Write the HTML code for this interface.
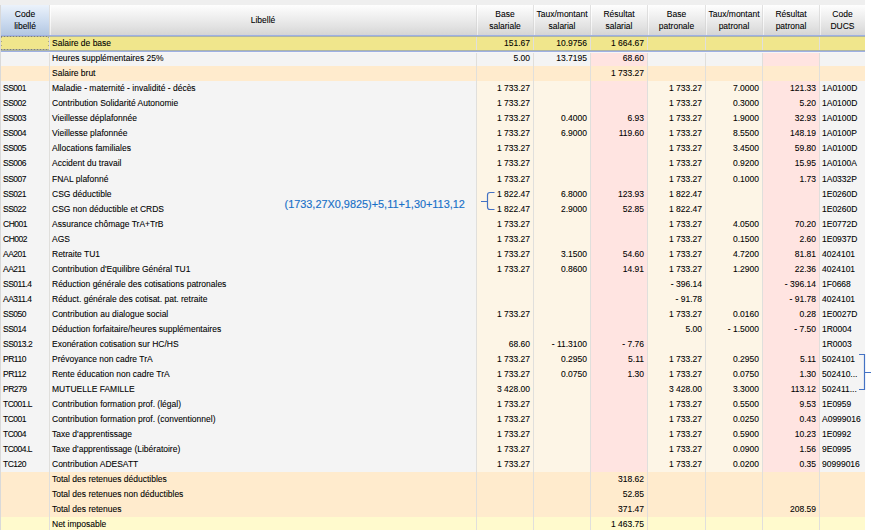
<!DOCTYPE html>
<html><head><meta charset="utf-8"><style>
*{margin:0;padding:0;box-sizing:border-box}
html,body{width:871px;height:530px;overflow:hidden;background:#ffffff}
body{position:relative;font-family:"Liberation Sans",sans-serif;font-size:8.5px;color:#000}
.a{position:absolute}
.t{position:absolute;white-space:nowrap;line-height:15px;height:15px;-webkit-text-stroke:0.08px #000}
.r{text-align:right}
.h{position:absolute;top:5px;height:30px;background:linear-gradient(#fefefe,#f1f1f1 35%,#e3e3e3 70%,#d5d5d5);text-align:center;line-height:12px;color:#000;-webkit-text-stroke:0.08px #000}
</style></head><body>

<div class="a" style="left:0;top:0;width:865px;height:5px;background:#efefef"></div>
<div class="a" style="left:0;top:5px;width:1px;height:525px;background:#d9d9d9"></div>
<div class="h" style="left:1px;width:48px;background:linear-gradient(#ebf2fb,#c9d9ee 60%,#b3c7e1);padding-top:3px;">Code<br>libellé</div>
<div class="h" style="left:50px;width:426px;padding-top:9px;">Libellé</div>
<div class="h" style="left:477px;width:56px;padding-top:3px;">Base<br>salariale</div>
<div class="h" style="left:534px;width:56px;padding-top:3px;">Taux/montant<br>salarial</div>
<div class="h" style="left:591px;width:56px;padding-top:3px;">Résultat<br>salarial</div>
<div class="h" style="left:648px;width:57px;padding-top:3px;">Base<br>patronale</div>
<div class="h" style="left:706px;width:56px;padding-top:3px;">Taux/montant<br>patronal</div>
<div class="h" style="left:763px;width:56px;padding-top:3px;">Résultat<br>patronal</div>
<div class="h" style="left:820px;width:45px;padding-top:3px;">Code<br>DUCS</div>
<div class="a" style="left:49px;top:5px;width:1px;height:30px;background:linear-gradient(#e2e2e2,#d4d4d4)"></div>
<div class="a" style="left:50px;top:5px;width:1px;height:30px;background:linear-gradient(rgba(255,255,255,.9),rgba(255,255,255,.5))"></div>
<div class="a" style="left:476px;top:5px;width:1px;height:30px;background:linear-gradient(#e2e2e2,#d4d4d4)"></div>
<div class="a" style="left:477px;top:5px;width:1px;height:30px;background:linear-gradient(rgba(255,255,255,.9),rgba(255,255,255,.5))"></div>
<div class="a" style="left:533px;top:5px;width:1px;height:30px;background:linear-gradient(#e2e2e2,#d4d4d4)"></div>
<div class="a" style="left:534px;top:5px;width:1px;height:30px;background:linear-gradient(rgba(255,255,255,.9),rgba(255,255,255,.5))"></div>
<div class="a" style="left:590px;top:5px;width:1px;height:30px;background:linear-gradient(#e2e2e2,#d4d4d4)"></div>
<div class="a" style="left:591px;top:5px;width:1px;height:30px;background:linear-gradient(rgba(255,255,255,.9),rgba(255,255,255,.5))"></div>
<div class="a" style="left:647px;top:5px;width:1px;height:30px;background:linear-gradient(#e2e2e2,#d4d4d4)"></div>
<div class="a" style="left:648px;top:5px;width:1px;height:30px;background:linear-gradient(rgba(255,255,255,.9),rgba(255,255,255,.5))"></div>
<div class="a" style="left:705px;top:5px;width:1px;height:30px;background:linear-gradient(#e2e2e2,#d4d4d4)"></div>
<div class="a" style="left:706px;top:5px;width:1px;height:30px;background:linear-gradient(rgba(255,255,255,.9),rgba(255,255,255,.5))"></div>
<div class="a" style="left:762px;top:5px;width:1px;height:30px;background:linear-gradient(#e2e2e2,#d4d4d4)"></div>
<div class="a" style="left:763px;top:5px;width:1px;height:30px;background:linear-gradient(rgba(255,255,255,.9),rgba(255,255,255,.5))"></div>
<div class="a" style="left:819px;top:5px;width:1px;height:30px;background:linear-gradient(#e2e2e2,#d4d4d4)"></div>
<div class="a" style="left:820px;top:5px;width:1px;height:30px;background:linear-gradient(rgba(255,255,255,.9),rgba(255,255,255,.5))"></div>
<div class="a" style="left:1px;top:35px;width:864px;height:1px;background:#9eb0e4"></div>
<div class="a" style="left:1px;top:36px;width:48px;height:15px;background:#f0e68c"></div>
<div class="a" style="left:50px;top:36px;width:426px;height:15px;background:#f0e68c"></div>
<div class="a" style="left:477px;top:36px;width:56px;height:15px;background:#f0e68c"></div>
<div class="a" style="left:534px;top:36px;width:56px;height:15px;background:#f0e68c"></div>
<div class="a" style="left:591px;top:36px;width:56px;height:15px;background:#f0e68c"></div>
<div class="a" style="left:648px;top:36px;width:57px;height:15px;background:#f0e68c"></div>
<div class="a" style="left:706px;top:36px;width:56px;height:15px;background:#f0e68c"></div>
<div class="a" style="left:763px;top:36px;width:56px;height:15px;background:#f0e68c"></div>
<div class="a" style="left:820px;top:36px;width:45px;height:15px;background:#f0e68c"></div>
<div class="a" style="left:49px;top:36px;width:1px;height:15px;background:#e0dfdc"></div>
<div class="a" style="left:476px;top:36px;width:1px;height:15px;background:#e0dfdc"></div>
<div class="a" style="left:533px;top:36px;width:1px;height:15px;background:#e0dfdc"></div>
<div class="a" style="left:590px;top:36px;width:1px;height:15px;background:#e0dfdc"></div>
<div class="a" style="left:647px;top:36px;width:1px;height:15px;background:#e0dfdc"></div>
<div class="a" style="left:705px;top:36px;width:1px;height:15px;background:#e0dfdc"></div>
<div class="a" style="left:762px;top:36px;width:1px;height:15px;background:#e0dfdc"></div>
<div class="a" style="left:819px;top:36px;width:1px;height:15px;background:#e0dfdc"></div>
<div class="t" style="left:52px;top:36px">Salaire de base</div>
<div class="t r" style="right:341px;top:36px">151.67</div>
<div class="t r" style="right:284px;top:36px">10.9756</div>
<div class="t r" style="right:227px;top:36px">1 664.67</div>
<div class="a" style="left:1px;top:51px;width:48px;height:15px;background:#f4f4f4"></div>
<div class="a" style="left:50px;top:51px;width:426px;height:15px;background:#f4f4f4"></div>
<div class="a" style="left:477px;top:51px;width:56px;height:15px;background:#f4f4f4"></div>
<div class="a" style="left:534px;top:51px;width:56px;height:15px;background:#f4f4f4"></div>
<div class="a" style="left:591px;top:51px;width:56px;height:15px;background:#ffe4e1"></div>
<div class="a" style="left:648px;top:51px;width:57px;height:15px;background:#f4f4f4"></div>
<div class="a" style="left:706px;top:51px;width:56px;height:15px;background:#f4f4f4"></div>
<div class="a" style="left:763px;top:51px;width:56px;height:15px;background:#ffe4e1"></div>
<div class="a" style="left:820px;top:51px;width:45px;height:15px;background:#f4f4f4"></div>
<div class="a" style="left:49px;top:51px;width:1px;height:15px;background:#e0dfdc"></div>
<div class="a" style="left:476px;top:51px;width:1px;height:15px;background:#e0dfdc"></div>
<div class="a" style="left:533px;top:51px;width:1px;height:15px;background:#e0dfdc"></div>
<div class="a" style="left:590px;top:51px;width:1px;height:15px;background:#e0dfdc"></div>
<div class="a" style="left:647px;top:51px;width:1px;height:15px;background:#e0dfdc"></div>
<div class="a" style="left:705px;top:51px;width:1px;height:15px;background:#e0dfdc"></div>
<div class="a" style="left:762px;top:51px;width:1px;height:15px;background:#e0dfdc"></div>
<div class="a" style="left:819px;top:51px;width:1px;height:15px;background:#e0dfdc"></div>
<div class="t" style="left:52px;top:51px">Heures supplémentaires 25%</div>
<div class="t r" style="right:341px;top:51px">5.00</div>
<div class="t r" style="right:284px;top:51px">13.7195</div>
<div class="t r" style="right:227px;top:51px">68.60</div>
<div class="a" style="left:1px;top:66px;width:48px;height:15px;background:#ffebcd"></div>
<div class="a" style="left:50px;top:66px;width:426px;height:15px;background:#ffebcd"></div>
<div class="a" style="left:477px;top:66px;width:56px;height:15px;background:#ffebcd"></div>
<div class="a" style="left:534px;top:66px;width:56px;height:15px;background:#ffebcd"></div>
<div class="a" style="left:591px;top:66px;width:56px;height:15px;background:#ffebcd"></div>
<div class="a" style="left:648px;top:66px;width:57px;height:15px;background:#ffebcd"></div>
<div class="a" style="left:706px;top:66px;width:56px;height:15px;background:#ffebcd"></div>
<div class="a" style="left:763px;top:66px;width:56px;height:15px;background:#ffebcd"></div>
<div class="a" style="left:820px;top:66px;width:45px;height:15px;background:#ffebcd"></div>
<div class="a" style="left:49px;top:66px;width:1px;height:15px;background:#e0dfdc"></div>
<div class="a" style="left:476px;top:66px;width:1px;height:15px;background:#e0dfdc"></div>
<div class="a" style="left:533px;top:66px;width:1px;height:15px;background:#e0dfdc"></div>
<div class="a" style="left:590px;top:66px;width:1px;height:15px;background:#e0dfdc"></div>
<div class="a" style="left:647px;top:66px;width:1px;height:15px;background:#e0dfdc"></div>
<div class="a" style="left:705px;top:66px;width:1px;height:15px;background:#e0dfdc"></div>
<div class="a" style="left:762px;top:66px;width:1px;height:15px;background:#e0dfdc"></div>
<div class="a" style="left:819px;top:66px;width:1px;height:15px;background:#e0dfdc"></div>
<div class="t" style="left:52px;top:66px">Salaire brut</div>
<div class="t r" style="right:227px;top:66px">1 733.27</div>
<div class="a" style="left:1px;top:81px;width:48px;height:15px;background:#f4f4f4"></div>
<div class="a" style="left:50px;top:81px;width:426px;height:15px;background:#f4f4f4"></div>
<div class="a" style="left:477px;top:81px;width:56px;height:15px;background:#fdf5e6"></div>
<div class="a" style="left:534px;top:81px;width:56px;height:15px;background:#fdf5e6"></div>
<div class="a" style="left:591px;top:81px;width:56px;height:15px;background:#ffe4e1"></div>
<div class="a" style="left:648px;top:81px;width:57px;height:15px;background:#fdf5e6"></div>
<div class="a" style="left:706px;top:81px;width:56px;height:15px;background:#fdf5e6"></div>
<div class="a" style="left:763px;top:81px;width:56px;height:15px;background:#ffe4e1"></div>
<div class="a" style="left:820px;top:81px;width:45px;height:15px;background:#f4f4f4"></div>
<div class="a" style="left:49px;top:81px;width:1px;height:15px;background:#e0dfdc"></div>
<div class="a" style="left:476px;top:81px;width:1px;height:15px;background:#e0dfdc"></div>
<div class="a" style="left:533px;top:81px;width:1px;height:15px;background:#e0dfdc"></div>
<div class="a" style="left:590px;top:81px;width:1px;height:15px;background:#e0dfdc"></div>
<div class="a" style="left:647px;top:81px;width:1px;height:15px;background:#e0dfdc"></div>
<div class="a" style="left:705px;top:81px;width:1px;height:15px;background:#e0dfdc"></div>
<div class="a" style="left:762px;top:81px;width:1px;height:15px;background:#e0dfdc"></div>
<div class="a" style="left:819px;top:81px;width:1px;height:15px;background:#e0dfdc"></div>
<div class="t" style="left:3px;top:81px;letter-spacing:-0.5px">SS001</div>
<div class="t" style="left:52px;top:81px">Maladie - maternité - invalidité - décès</div>
<div class="t r" style="right:341px;top:81px">1 733.27</div>
<div class="t r" style="right:169px;top:81px">1 733.27</div>
<div class="t r" style="right:112px;top:81px">7.0000</div>
<div class="t r" style="right:55px;top:81px">121.33</div>
<div class="t" style="left:822px;top:81px">1A0100D</div>
<div class="a" style="left:1px;top:96px;width:48px;height:15px;background:#f4f4f4"></div>
<div class="a" style="left:50px;top:96px;width:426px;height:15px;background:#f4f4f4"></div>
<div class="a" style="left:477px;top:96px;width:56px;height:15px;background:#fdf5e6"></div>
<div class="a" style="left:534px;top:96px;width:56px;height:15px;background:#fdf5e6"></div>
<div class="a" style="left:591px;top:96px;width:56px;height:15px;background:#ffe4e1"></div>
<div class="a" style="left:648px;top:96px;width:57px;height:15px;background:#fdf5e6"></div>
<div class="a" style="left:706px;top:96px;width:56px;height:15px;background:#fdf5e6"></div>
<div class="a" style="left:763px;top:96px;width:56px;height:15px;background:#ffe4e1"></div>
<div class="a" style="left:820px;top:96px;width:45px;height:15px;background:#f4f4f4"></div>
<div class="a" style="left:49px;top:96px;width:1px;height:15px;background:#e0dfdc"></div>
<div class="a" style="left:476px;top:96px;width:1px;height:15px;background:#e0dfdc"></div>
<div class="a" style="left:533px;top:96px;width:1px;height:15px;background:#e0dfdc"></div>
<div class="a" style="left:590px;top:96px;width:1px;height:15px;background:#e0dfdc"></div>
<div class="a" style="left:647px;top:96px;width:1px;height:15px;background:#e0dfdc"></div>
<div class="a" style="left:705px;top:96px;width:1px;height:15px;background:#e0dfdc"></div>
<div class="a" style="left:762px;top:96px;width:1px;height:15px;background:#e0dfdc"></div>
<div class="a" style="left:819px;top:96px;width:1px;height:15px;background:#e0dfdc"></div>
<div class="t" style="left:3px;top:96px;letter-spacing:-0.5px">SS002</div>
<div class="t" style="left:52px;top:96px">Contribution Solidarité Autonomie</div>
<div class="t r" style="right:341px;top:96px">1 733.27</div>
<div class="t r" style="right:169px;top:96px">1 733.27</div>
<div class="t r" style="right:112px;top:96px">0.3000</div>
<div class="t r" style="right:55px;top:96px">5.20</div>
<div class="t" style="left:822px;top:96px">1A0100D</div>
<div class="a" style="left:1px;top:111px;width:48px;height:15px;background:#f4f4f4"></div>
<div class="a" style="left:50px;top:111px;width:426px;height:15px;background:#f4f4f4"></div>
<div class="a" style="left:477px;top:111px;width:56px;height:15px;background:#fdf5e6"></div>
<div class="a" style="left:534px;top:111px;width:56px;height:15px;background:#fdf5e6"></div>
<div class="a" style="left:591px;top:111px;width:56px;height:15px;background:#ffe4e1"></div>
<div class="a" style="left:648px;top:111px;width:57px;height:15px;background:#fdf5e6"></div>
<div class="a" style="left:706px;top:111px;width:56px;height:15px;background:#fdf5e6"></div>
<div class="a" style="left:763px;top:111px;width:56px;height:15px;background:#ffe4e1"></div>
<div class="a" style="left:820px;top:111px;width:45px;height:15px;background:#f4f4f4"></div>
<div class="a" style="left:49px;top:111px;width:1px;height:15px;background:#e0dfdc"></div>
<div class="a" style="left:476px;top:111px;width:1px;height:15px;background:#e0dfdc"></div>
<div class="a" style="left:533px;top:111px;width:1px;height:15px;background:#e0dfdc"></div>
<div class="a" style="left:590px;top:111px;width:1px;height:15px;background:#e0dfdc"></div>
<div class="a" style="left:647px;top:111px;width:1px;height:15px;background:#e0dfdc"></div>
<div class="a" style="left:705px;top:111px;width:1px;height:15px;background:#e0dfdc"></div>
<div class="a" style="left:762px;top:111px;width:1px;height:15px;background:#e0dfdc"></div>
<div class="a" style="left:819px;top:111px;width:1px;height:15px;background:#e0dfdc"></div>
<div class="t" style="left:3px;top:111px;letter-spacing:-0.5px">SS003</div>
<div class="t" style="left:52px;top:111px">Vieillesse déplafonnée</div>
<div class="t r" style="right:341px;top:111px">1 733.27</div>
<div class="t r" style="right:284px;top:111px">0.4000</div>
<div class="t r" style="right:227px;top:111px">6.93</div>
<div class="t r" style="right:169px;top:111px">1 733.27</div>
<div class="t r" style="right:112px;top:111px">1.9000</div>
<div class="t r" style="right:55px;top:111px">32.93</div>
<div class="t" style="left:822px;top:111px">1A0100D</div>
<div class="a" style="left:1px;top:126px;width:48px;height:15px;background:#f4f4f4"></div>
<div class="a" style="left:50px;top:126px;width:426px;height:15px;background:#f4f4f4"></div>
<div class="a" style="left:477px;top:126px;width:56px;height:15px;background:#fdf5e6"></div>
<div class="a" style="left:534px;top:126px;width:56px;height:15px;background:#fdf5e6"></div>
<div class="a" style="left:591px;top:126px;width:56px;height:15px;background:#ffe4e1"></div>
<div class="a" style="left:648px;top:126px;width:57px;height:15px;background:#fdf5e6"></div>
<div class="a" style="left:706px;top:126px;width:56px;height:15px;background:#fdf5e6"></div>
<div class="a" style="left:763px;top:126px;width:56px;height:15px;background:#ffe4e1"></div>
<div class="a" style="left:820px;top:126px;width:45px;height:15px;background:#f4f4f4"></div>
<div class="a" style="left:49px;top:126px;width:1px;height:15px;background:#e0dfdc"></div>
<div class="a" style="left:476px;top:126px;width:1px;height:15px;background:#e0dfdc"></div>
<div class="a" style="left:533px;top:126px;width:1px;height:15px;background:#e0dfdc"></div>
<div class="a" style="left:590px;top:126px;width:1px;height:15px;background:#e0dfdc"></div>
<div class="a" style="left:647px;top:126px;width:1px;height:15px;background:#e0dfdc"></div>
<div class="a" style="left:705px;top:126px;width:1px;height:15px;background:#e0dfdc"></div>
<div class="a" style="left:762px;top:126px;width:1px;height:15px;background:#e0dfdc"></div>
<div class="a" style="left:819px;top:126px;width:1px;height:15px;background:#e0dfdc"></div>
<div class="t" style="left:3px;top:126px;letter-spacing:-0.5px">SS004</div>
<div class="t" style="left:52px;top:126px">Vieillesse plafonnée</div>
<div class="t r" style="right:341px;top:126px">1 733.27</div>
<div class="t r" style="right:284px;top:126px">6.9000</div>
<div class="t r" style="right:227px;top:126px">119.60</div>
<div class="t r" style="right:169px;top:126px">1 733.27</div>
<div class="t r" style="right:112px;top:126px">8.5500</div>
<div class="t r" style="right:55px;top:126px">148.19</div>
<div class="t" style="left:822px;top:126px">1A0100P</div>
<div class="a" style="left:1px;top:141px;width:48px;height:15px;background:#f4f4f4"></div>
<div class="a" style="left:50px;top:141px;width:426px;height:15px;background:#f4f4f4"></div>
<div class="a" style="left:477px;top:141px;width:56px;height:15px;background:#fdf5e6"></div>
<div class="a" style="left:534px;top:141px;width:56px;height:15px;background:#fdf5e6"></div>
<div class="a" style="left:591px;top:141px;width:56px;height:15px;background:#ffe4e1"></div>
<div class="a" style="left:648px;top:141px;width:57px;height:15px;background:#fdf5e6"></div>
<div class="a" style="left:706px;top:141px;width:56px;height:15px;background:#fdf5e6"></div>
<div class="a" style="left:763px;top:141px;width:56px;height:15px;background:#ffe4e1"></div>
<div class="a" style="left:820px;top:141px;width:45px;height:15px;background:#f4f4f4"></div>
<div class="a" style="left:49px;top:141px;width:1px;height:15px;background:#e0dfdc"></div>
<div class="a" style="left:476px;top:141px;width:1px;height:15px;background:#e0dfdc"></div>
<div class="a" style="left:533px;top:141px;width:1px;height:15px;background:#e0dfdc"></div>
<div class="a" style="left:590px;top:141px;width:1px;height:15px;background:#e0dfdc"></div>
<div class="a" style="left:647px;top:141px;width:1px;height:15px;background:#e0dfdc"></div>
<div class="a" style="left:705px;top:141px;width:1px;height:15px;background:#e0dfdc"></div>
<div class="a" style="left:762px;top:141px;width:1px;height:15px;background:#e0dfdc"></div>
<div class="a" style="left:819px;top:141px;width:1px;height:15px;background:#e0dfdc"></div>
<div class="t" style="left:3px;top:141px;letter-spacing:-0.5px">SS005</div>
<div class="t" style="left:52px;top:141px">Allocations familiales</div>
<div class="t r" style="right:341px;top:141px">1 733.27</div>
<div class="t r" style="right:169px;top:141px">1 733.27</div>
<div class="t r" style="right:112px;top:141px">3.4500</div>
<div class="t r" style="right:55px;top:141px">59.80</div>
<div class="t" style="left:822px;top:141px">1A0100D</div>
<div class="a" style="left:1px;top:156px;width:48px;height:16px;background:#f4f4f4"></div>
<div class="a" style="left:50px;top:156px;width:426px;height:16px;background:#f4f4f4"></div>
<div class="a" style="left:477px;top:156px;width:56px;height:16px;background:#fdf5e6"></div>
<div class="a" style="left:534px;top:156px;width:56px;height:16px;background:#fdf5e6"></div>
<div class="a" style="left:591px;top:156px;width:56px;height:16px;background:#ffe4e1"></div>
<div class="a" style="left:648px;top:156px;width:57px;height:16px;background:#fdf5e6"></div>
<div class="a" style="left:706px;top:156px;width:56px;height:16px;background:#fdf5e6"></div>
<div class="a" style="left:763px;top:156px;width:56px;height:16px;background:#ffe4e1"></div>
<div class="a" style="left:820px;top:156px;width:45px;height:16px;background:#f4f4f4"></div>
<div class="a" style="left:49px;top:156px;width:1px;height:16px;background:#e0dfdc"></div>
<div class="a" style="left:476px;top:156px;width:1px;height:16px;background:#e0dfdc"></div>
<div class="a" style="left:533px;top:156px;width:1px;height:16px;background:#e0dfdc"></div>
<div class="a" style="left:590px;top:156px;width:1px;height:16px;background:#e0dfdc"></div>
<div class="a" style="left:647px;top:156px;width:1px;height:16px;background:#e0dfdc"></div>
<div class="a" style="left:705px;top:156px;width:1px;height:16px;background:#e0dfdc"></div>
<div class="a" style="left:762px;top:156px;width:1px;height:16px;background:#e0dfdc"></div>
<div class="a" style="left:819px;top:156px;width:1px;height:16px;background:#e0dfdc"></div>
<div class="t" style="left:3px;top:156px;letter-spacing:-0.5px">SS006</div>
<div class="t" style="left:52px;top:156px">Accident du travail</div>
<div class="t r" style="right:341px;top:156px">1 733.27</div>
<div class="t r" style="right:169px;top:156px">1 733.27</div>
<div class="t r" style="right:112px;top:156px">0.9200</div>
<div class="t r" style="right:55px;top:156px">15.95</div>
<div class="t" style="left:822px;top:156px">1A0100A</div>
<div class="a" style="left:1px;top:172px;width:48px;height:15px;background:#f4f4f4"></div>
<div class="a" style="left:50px;top:172px;width:426px;height:15px;background:#f4f4f4"></div>
<div class="a" style="left:477px;top:172px;width:56px;height:15px;background:#fdf5e6"></div>
<div class="a" style="left:534px;top:172px;width:56px;height:15px;background:#fdf5e6"></div>
<div class="a" style="left:591px;top:172px;width:56px;height:15px;background:#ffe4e1"></div>
<div class="a" style="left:648px;top:172px;width:57px;height:15px;background:#fdf5e6"></div>
<div class="a" style="left:706px;top:172px;width:56px;height:15px;background:#fdf5e6"></div>
<div class="a" style="left:763px;top:172px;width:56px;height:15px;background:#ffe4e1"></div>
<div class="a" style="left:820px;top:172px;width:45px;height:15px;background:#f4f4f4"></div>
<div class="a" style="left:49px;top:172px;width:1px;height:15px;background:#e0dfdc"></div>
<div class="a" style="left:476px;top:172px;width:1px;height:15px;background:#e0dfdc"></div>
<div class="a" style="left:533px;top:172px;width:1px;height:15px;background:#e0dfdc"></div>
<div class="a" style="left:590px;top:172px;width:1px;height:15px;background:#e0dfdc"></div>
<div class="a" style="left:647px;top:172px;width:1px;height:15px;background:#e0dfdc"></div>
<div class="a" style="left:705px;top:172px;width:1px;height:15px;background:#e0dfdc"></div>
<div class="a" style="left:762px;top:172px;width:1px;height:15px;background:#e0dfdc"></div>
<div class="a" style="left:819px;top:172px;width:1px;height:15px;background:#e0dfdc"></div>
<div class="t" style="left:3px;top:172px;letter-spacing:-0.5px">SS007</div>
<div class="t" style="left:52px;top:172px">FNAL plafonné</div>
<div class="t r" style="right:341px;top:172px">1 733.27</div>
<div class="t r" style="right:169px;top:172px">1 733.27</div>
<div class="t r" style="right:112px;top:172px">0.1000</div>
<div class="t r" style="right:55px;top:172px">1.73</div>
<div class="t" style="left:822px;top:172px">1A0332P</div>
<div class="a" style="left:1px;top:187px;width:48px;height:15px;background:#f4f4f4"></div>
<div class="a" style="left:50px;top:187px;width:426px;height:15px;background:#f4f4f4"></div>
<div class="a" style="left:477px;top:187px;width:56px;height:15px;background:#fdf5e6"></div>
<div class="a" style="left:534px;top:187px;width:56px;height:15px;background:#fdf5e6"></div>
<div class="a" style="left:591px;top:187px;width:56px;height:15px;background:#ffe4e1"></div>
<div class="a" style="left:648px;top:187px;width:57px;height:15px;background:#fdf5e6"></div>
<div class="a" style="left:706px;top:187px;width:56px;height:15px;background:#fdf5e6"></div>
<div class="a" style="left:763px;top:187px;width:56px;height:15px;background:#ffe4e1"></div>
<div class="a" style="left:820px;top:187px;width:45px;height:15px;background:#f4f4f4"></div>
<div class="a" style="left:49px;top:187px;width:1px;height:15px;background:#e0dfdc"></div>
<div class="a" style="left:476px;top:187px;width:1px;height:15px;background:#e0dfdc"></div>
<div class="a" style="left:533px;top:187px;width:1px;height:15px;background:#e0dfdc"></div>
<div class="a" style="left:590px;top:187px;width:1px;height:15px;background:#e0dfdc"></div>
<div class="a" style="left:647px;top:187px;width:1px;height:15px;background:#e0dfdc"></div>
<div class="a" style="left:705px;top:187px;width:1px;height:15px;background:#e0dfdc"></div>
<div class="a" style="left:762px;top:187px;width:1px;height:15px;background:#e0dfdc"></div>
<div class="a" style="left:819px;top:187px;width:1px;height:15px;background:#e0dfdc"></div>
<div class="t" style="left:3px;top:187px;letter-spacing:-0.5px">SS021</div>
<div class="t" style="left:52px;top:187px">CSG déductible</div>
<div class="t r" style="right:341px;top:187px">1 822.47</div>
<div class="t r" style="right:284px;top:187px">6.8000</div>
<div class="t r" style="right:227px;top:187px">123.93</div>
<div class="t r" style="right:169px;top:187px">1 822.47</div>
<div class="t" style="left:822px;top:187px">1E0260D</div>
<div class="a" style="left:1px;top:202px;width:48px;height:15px;background:#f4f4f4"></div>
<div class="a" style="left:50px;top:202px;width:426px;height:15px;background:#f4f4f4"></div>
<div class="a" style="left:477px;top:202px;width:56px;height:15px;background:#fdf5e6"></div>
<div class="a" style="left:534px;top:202px;width:56px;height:15px;background:#fdf5e6"></div>
<div class="a" style="left:591px;top:202px;width:56px;height:15px;background:#ffe4e1"></div>
<div class="a" style="left:648px;top:202px;width:57px;height:15px;background:#fdf5e6"></div>
<div class="a" style="left:706px;top:202px;width:56px;height:15px;background:#fdf5e6"></div>
<div class="a" style="left:763px;top:202px;width:56px;height:15px;background:#ffe4e1"></div>
<div class="a" style="left:820px;top:202px;width:45px;height:15px;background:#f4f4f4"></div>
<div class="a" style="left:49px;top:202px;width:1px;height:15px;background:#e0dfdc"></div>
<div class="a" style="left:476px;top:202px;width:1px;height:15px;background:#e0dfdc"></div>
<div class="a" style="left:533px;top:202px;width:1px;height:15px;background:#e0dfdc"></div>
<div class="a" style="left:590px;top:202px;width:1px;height:15px;background:#e0dfdc"></div>
<div class="a" style="left:647px;top:202px;width:1px;height:15px;background:#e0dfdc"></div>
<div class="a" style="left:705px;top:202px;width:1px;height:15px;background:#e0dfdc"></div>
<div class="a" style="left:762px;top:202px;width:1px;height:15px;background:#e0dfdc"></div>
<div class="a" style="left:819px;top:202px;width:1px;height:15px;background:#e0dfdc"></div>
<div class="t" style="left:3px;top:202px;letter-spacing:-0.5px">SS022</div>
<div class="t" style="left:52px;top:202px">CSG non déductible et CRDS</div>
<div class="t r" style="right:341px;top:202px">1 822.47</div>
<div class="t r" style="right:284px;top:202px">2.9000</div>
<div class="t r" style="right:227px;top:202px">52.85</div>
<div class="t r" style="right:169px;top:202px">1 822.47</div>
<div class="t" style="left:822px;top:202px">1E0260D</div>
<div class="a" style="left:1px;top:217px;width:48px;height:15px;background:#f4f4f4"></div>
<div class="a" style="left:50px;top:217px;width:426px;height:15px;background:#f4f4f4"></div>
<div class="a" style="left:477px;top:217px;width:56px;height:15px;background:#fdf5e6"></div>
<div class="a" style="left:534px;top:217px;width:56px;height:15px;background:#fdf5e6"></div>
<div class="a" style="left:591px;top:217px;width:56px;height:15px;background:#ffe4e1"></div>
<div class="a" style="left:648px;top:217px;width:57px;height:15px;background:#fdf5e6"></div>
<div class="a" style="left:706px;top:217px;width:56px;height:15px;background:#fdf5e6"></div>
<div class="a" style="left:763px;top:217px;width:56px;height:15px;background:#ffe4e1"></div>
<div class="a" style="left:820px;top:217px;width:45px;height:15px;background:#f4f4f4"></div>
<div class="a" style="left:49px;top:217px;width:1px;height:15px;background:#e0dfdc"></div>
<div class="a" style="left:476px;top:217px;width:1px;height:15px;background:#e0dfdc"></div>
<div class="a" style="left:533px;top:217px;width:1px;height:15px;background:#e0dfdc"></div>
<div class="a" style="left:590px;top:217px;width:1px;height:15px;background:#e0dfdc"></div>
<div class="a" style="left:647px;top:217px;width:1px;height:15px;background:#e0dfdc"></div>
<div class="a" style="left:705px;top:217px;width:1px;height:15px;background:#e0dfdc"></div>
<div class="a" style="left:762px;top:217px;width:1px;height:15px;background:#e0dfdc"></div>
<div class="a" style="left:819px;top:217px;width:1px;height:15px;background:#e0dfdc"></div>
<div class="t" style="left:3px;top:217px;letter-spacing:-0.5px">CH001</div>
<div class="t" style="left:52px;top:217px">Assurance chômage TrA+TrB</div>
<div class="t r" style="right:341px;top:217px">1 733.27</div>
<div class="t r" style="right:169px;top:217px">1 733.27</div>
<div class="t r" style="right:112px;top:217px">4.0500</div>
<div class="t r" style="right:55px;top:217px">70.20</div>
<div class="t" style="left:822px;top:217px">1E0772D</div>
<div class="a" style="left:1px;top:232px;width:48px;height:15px;background:#f4f4f4"></div>
<div class="a" style="left:50px;top:232px;width:426px;height:15px;background:#f4f4f4"></div>
<div class="a" style="left:477px;top:232px;width:56px;height:15px;background:#fdf5e6"></div>
<div class="a" style="left:534px;top:232px;width:56px;height:15px;background:#fdf5e6"></div>
<div class="a" style="left:591px;top:232px;width:56px;height:15px;background:#ffe4e1"></div>
<div class="a" style="left:648px;top:232px;width:57px;height:15px;background:#fdf5e6"></div>
<div class="a" style="left:706px;top:232px;width:56px;height:15px;background:#fdf5e6"></div>
<div class="a" style="left:763px;top:232px;width:56px;height:15px;background:#ffe4e1"></div>
<div class="a" style="left:820px;top:232px;width:45px;height:15px;background:#f4f4f4"></div>
<div class="a" style="left:49px;top:232px;width:1px;height:15px;background:#e0dfdc"></div>
<div class="a" style="left:476px;top:232px;width:1px;height:15px;background:#e0dfdc"></div>
<div class="a" style="left:533px;top:232px;width:1px;height:15px;background:#e0dfdc"></div>
<div class="a" style="left:590px;top:232px;width:1px;height:15px;background:#e0dfdc"></div>
<div class="a" style="left:647px;top:232px;width:1px;height:15px;background:#e0dfdc"></div>
<div class="a" style="left:705px;top:232px;width:1px;height:15px;background:#e0dfdc"></div>
<div class="a" style="left:762px;top:232px;width:1px;height:15px;background:#e0dfdc"></div>
<div class="a" style="left:819px;top:232px;width:1px;height:15px;background:#e0dfdc"></div>
<div class="t" style="left:3px;top:232px;letter-spacing:-0.5px">CH002</div>
<div class="t" style="left:52px;top:232px">AGS</div>
<div class="t r" style="right:341px;top:232px">1 733.27</div>
<div class="t r" style="right:169px;top:232px">1 733.27</div>
<div class="t r" style="right:112px;top:232px">0.1500</div>
<div class="t r" style="right:55px;top:232px">2.60</div>
<div class="t" style="left:822px;top:232px">1E0937D</div>
<div class="a" style="left:1px;top:247px;width:48px;height:15px;background:#f4f4f4"></div>
<div class="a" style="left:50px;top:247px;width:426px;height:15px;background:#f4f4f4"></div>
<div class="a" style="left:477px;top:247px;width:56px;height:15px;background:#fdf5e6"></div>
<div class="a" style="left:534px;top:247px;width:56px;height:15px;background:#fdf5e6"></div>
<div class="a" style="left:591px;top:247px;width:56px;height:15px;background:#ffe4e1"></div>
<div class="a" style="left:648px;top:247px;width:57px;height:15px;background:#fdf5e6"></div>
<div class="a" style="left:706px;top:247px;width:56px;height:15px;background:#fdf5e6"></div>
<div class="a" style="left:763px;top:247px;width:56px;height:15px;background:#ffe4e1"></div>
<div class="a" style="left:820px;top:247px;width:45px;height:15px;background:#f4f4f4"></div>
<div class="a" style="left:49px;top:247px;width:1px;height:15px;background:#e0dfdc"></div>
<div class="a" style="left:476px;top:247px;width:1px;height:15px;background:#e0dfdc"></div>
<div class="a" style="left:533px;top:247px;width:1px;height:15px;background:#e0dfdc"></div>
<div class="a" style="left:590px;top:247px;width:1px;height:15px;background:#e0dfdc"></div>
<div class="a" style="left:647px;top:247px;width:1px;height:15px;background:#e0dfdc"></div>
<div class="a" style="left:705px;top:247px;width:1px;height:15px;background:#e0dfdc"></div>
<div class="a" style="left:762px;top:247px;width:1px;height:15px;background:#e0dfdc"></div>
<div class="a" style="left:819px;top:247px;width:1px;height:15px;background:#e0dfdc"></div>
<div class="t" style="left:3px;top:247px;letter-spacing:-0.5px">AA201</div>
<div class="t" style="left:52px;top:247px">Retraite TU1</div>
<div class="t r" style="right:341px;top:247px">1 733.27</div>
<div class="t r" style="right:284px;top:247px">3.1500</div>
<div class="t r" style="right:227px;top:247px">54.60</div>
<div class="t r" style="right:169px;top:247px">1 733.27</div>
<div class="t r" style="right:112px;top:247px">4.7200</div>
<div class="t r" style="right:55px;top:247px">81.81</div>
<div class="t" style="left:822px;top:247px">4024101</div>
<div class="a" style="left:1px;top:262px;width:48px;height:15px;background:#f4f4f4"></div>
<div class="a" style="left:50px;top:262px;width:426px;height:15px;background:#f4f4f4"></div>
<div class="a" style="left:477px;top:262px;width:56px;height:15px;background:#fdf5e6"></div>
<div class="a" style="left:534px;top:262px;width:56px;height:15px;background:#fdf5e6"></div>
<div class="a" style="left:591px;top:262px;width:56px;height:15px;background:#ffe4e1"></div>
<div class="a" style="left:648px;top:262px;width:57px;height:15px;background:#fdf5e6"></div>
<div class="a" style="left:706px;top:262px;width:56px;height:15px;background:#fdf5e6"></div>
<div class="a" style="left:763px;top:262px;width:56px;height:15px;background:#ffe4e1"></div>
<div class="a" style="left:820px;top:262px;width:45px;height:15px;background:#f4f4f4"></div>
<div class="a" style="left:49px;top:262px;width:1px;height:15px;background:#e0dfdc"></div>
<div class="a" style="left:476px;top:262px;width:1px;height:15px;background:#e0dfdc"></div>
<div class="a" style="left:533px;top:262px;width:1px;height:15px;background:#e0dfdc"></div>
<div class="a" style="left:590px;top:262px;width:1px;height:15px;background:#e0dfdc"></div>
<div class="a" style="left:647px;top:262px;width:1px;height:15px;background:#e0dfdc"></div>
<div class="a" style="left:705px;top:262px;width:1px;height:15px;background:#e0dfdc"></div>
<div class="a" style="left:762px;top:262px;width:1px;height:15px;background:#e0dfdc"></div>
<div class="a" style="left:819px;top:262px;width:1px;height:15px;background:#e0dfdc"></div>
<div class="t" style="left:3px;top:262px;letter-spacing:-0.5px">AA211</div>
<div class="t" style="left:52px;top:262px">Contribution d'Equilibre Général TU1</div>
<div class="t r" style="right:341px;top:262px">1 733.27</div>
<div class="t r" style="right:284px;top:262px">0.8600</div>
<div class="t r" style="right:227px;top:262px">14.91</div>
<div class="t r" style="right:169px;top:262px">1 733.27</div>
<div class="t r" style="right:112px;top:262px">1.2900</div>
<div class="t r" style="right:55px;top:262px">22.36</div>
<div class="t" style="left:822px;top:262px">4024101</div>
<div class="a" style="left:1px;top:277px;width:48px;height:15px;background:#f4f4f4"></div>
<div class="a" style="left:50px;top:277px;width:426px;height:15px;background:#f4f4f4"></div>
<div class="a" style="left:477px;top:277px;width:56px;height:15px;background:#fdf5e6"></div>
<div class="a" style="left:534px;top:277px;width:56px;height:15px;background:#fdf5e6"></div>
<div class="a" style="left:591px;top:277px;width:56px;height:15px;background:#ffe4e1"></div>
<div class="a" style="left:648px;top:277px;width:57px;height:15px;background:#fdf5e6"></div>
<div class="a" style="left:706px;top:277px;width:56px;height:15px;background:#fdf5e6"></div>
<div class="a" style="left:763px;top:277px;width:56px;height:15px;background:#ffe4e1"></div>
<div class="a" style="left:820px;top:277px;width:45px;height:15px;background:#f4f4f4"></div>
<div class="a" style="left:49px;top:277px;width:1px;height:15px;background:#e0dfdc"></div>
<div class="a" style="left:476px;top:277px;width:1px;height:15px;background:#e0dfdc"></div>
<div class="a" style="left:533px;top:277px;width:1px;height:15px;background:#e0dfdc"></div>
<div class="a" style="left:590px;top:277px;width:1px;height:15px;background:#e0dfdc"></div>
<div class="a" style="left:647px;top:277px;width:1px;height:15px;background:#e0dfdc"></div>
<div class="a" style="left:705px;top:277px;width:1px;height:15px;background:#e0dfdc"></div>
<div class="a" style="left:762px;top:277px;width:1px;height:15px;background:#e0dfdc"></div>
<div class="a" style="left:819px;top:277px;width:1px;height:15px;background:#e0dfdc"></div>
<div class="t" style="left:3px;top:277px;letter-spacing:-0.5px">SS011.4</div>
<div class="t" style="left:52px;top:277px">Réduction générale des cotisations patronales</div>
<div class="t r" style="right:169px;top:277px">- 396.14</div>
<div class="t r" style="right:55px;top:277px">- 396.14</div>
<div class="t" style="left:822px;top:277px">1F0668</div>
<div class="a" style="left:1px;top:292px;width:48px;height:15px;background:#f4f4f4"></div>
<div class="a" style="left:50px;top:292px;width:426px;height:15px;background:#f4f4f4"></div>
<div class="a" style="left:477px;top:292px;width:56px;height:15px;background:#fdf5e6"></div>
<div class="a" style="left:534px;top:292px;width:56px;height:15px;background:#fdf5e6"></div>
<div class="a" style="left:591px;top:292px;width:56px;height:15px;background:#ffe4e1"></div>
<div class="a" style="left:648px;top:292px;width:57px;height:15px;background:#fdf5e6"></div>
<div class="a" style="left:706px;top:292px;width:56px;height:15px;background:#fdf5e6"></div>
<div class="a" style="left:763px;top:292px;width:56px;height:15px;background:#ffe4e1"></div>
<div class="a" style="left:820px;top:292px;width:45px;height:15px;background:#f4f4f4"></div>
<div class="a" style="left:49px;top:292px;width:1px;height:15px;background:#e0dfdc"></div>
<div class="a" style="left:476px;top:292px;width:1px;height:15px;background:#e0dfdc"></div>
<div class="a" style="left:533px;top:292px;width:1px;height:15px;background:#e0dfdc"></div>
<div class="a" style="left:590px;top:292px;width:1px;height:15px;background:#e0dfdc"></div>
<div class="a" style="left:647px;top:292px;width:1px;height:15px;background:#e0dfdc"></div>
<div class="a" style="left:705px;top:292px;width:1px;height:15px;background:#e0dfdc"></div>
<div class="a" style="left:762px;top:292px;width:1px;height:15px;background:#e0dfdc"></div>
<div class="a" style="left:819px;top:292px;width:1px;height:15px;background:#e0dfdc"></div>
<div class="t" style="left:3px;top:292px;letter-spacing:-0.5px">AA311.4</div>
<div class="t" style="left:52px;top:292px">Réduct. générale des cotisat. pat. retraite</div>
<div class="t r" style="right:169px;top:292px">- 91.78</div>
<div class="t r" style="right:55px;top:292px">- 91.78</div>
<div class="t" style="left:822px;top:292px">4024101</div>
<div class="a" style="left:1px;top:307px;width:48px;height:15px;background:#f4f4f4"></div>
<div class="a" style="left:50px;top:307px;width:426px;height:15px;background:#f4f4f4"></div>
<div class="a" style="left:477px;top:307px;width:56px;height:15px;background:#fdf5e6"></div>
<div class="a" style="left:534px;top:307px;width:56px;height:15px;background:#fdf5e6"></div>
<div class="a" style="left:591px;top:307px;width:56px;height:15px;background:#ffe4e1"></div>
<div class="a" style="left:648px;top:307px;width:57px;height:15px;background:#fdf5e6"></div>
<div class="a" style="left:706px;top:307px;width:56px;height:15px;background:#fdf5e6"></div>
<div class="a" style="left:763px;top:307px;width:56px;height:15px;background:#ffe4e1"></div>
<div class="a" style="left:820px;top:307px;width:45px;height:15px;background:#f4f4f4"></div>
<div class="a" style="left:49px;top:307px;width:1px;height:15px;background:#e0dfdc"></div>
<div class="a" style="left:476px;top:307px;width:1px;height:15px;background:#e0dfdc"></div>
<div class="a" style="left:533px;top:307px;width:1px;height:15px;background:#e0dfdc"></div>
<div class="a" style="left:590px;top:307px;width:1px;height:15px;background:#e0dfdc"></div>
<div class="a" style="left:647px;top:307px;width:1px;height:15px;background:#e0dfdc"></div>
<div class="a" style="left:705px;top:307px;width:1px;height:15px;background:#e0dfdc"></div>
<div class="a" style="left:762px;top:307px;width:1px;height:15px;background:#e0dfdc"></div>
<div class="a" style="left:819px;top:307px;width:1px;height:15px;background:#e0dfdc"></div>
<div class="t" style="left:3px;top:307px;letter-spacing:-0.5px">SS050</div>
<div class="t" style="left:52px;top:307px">Contribution au dialogue social</div>
<div class="t r" style="right:341px;top:307px">1 733.27</div>
<div class="t r" style="right:169px;top:307px">1 733.27</div>
<div class="t r" style="right:112px;top:307px">0.0160</div>
<div class="t r" style="right:55px;top:307px">0.28</div>
<div class="t" style="left:822px;top:307px">1E0027D</div>
<div class="a" style="left:1px;top:322px;width:48px;height:15px;background:#f4f4f4"></div>
<div class="a" style="left:50px;top:322px;width:426px;height:15px;background:#f4f4f4"></div>
<div class="a" style="left:477px;top:322px;width:56px;height:15px;background:#fdf5e6"></div>
<div class="a" style="left:534px;top:322px;width:56px;height:15px;background:#fdf5e6"></div>
<div class="a" style="left:591px;top:322px;width:56px;height:15px;background:#ffe4e1"></div>
<div class="a" style="left:648px;top:322px;width:57px;height:15px;background:#fdf5e6"></div>
<div class="a" style="left:706px;top:322px;width:56px;height:15px;background:#fdf5e6"></div>
<div class="a" style="left:763px;top:322px;width:56px;height:15px;background:#ffe4e1"></div>
<div class="a" style="left:820px;top:322px;width:45px;height:15px;background:#f4f4f4"></div>
<div class="a" style="left:49px;top:322px;width:1px;height:15px;background:#e0dfdc"></div>
<div class="a" style="left:476px;top:322px;width:1px;height:15px;background:#e0dfdc"></div>
<div class="a" style="left:533px;top:322px;width:1px;height:15px;background:#e0dfdc"></div>
<div class="a" style="left:590px;top:322px;width:1px;height:15px;background:#e0dfdc"></div>
<div class="a" style="left:647px;top:322px;width:1px;height:15px;background:#e0dfdc"></div>
<div class="a" style="left:705px;top:322px;width:1px;height:15px;background:#e0dfdc"></div>
<div class="a" style="left:762px;top:322px;width:1px;height:15px;background:#e0dfdc"></div>
<div class="a" style="left:819px;top:322px;width:1px;height:15px;background:#e0dfdc"></div>
<div class="t" style="left:3px;top:322px;letter-spacing:-0.5px">SS014</div>
<div class="t" style="left:52px;top:322px">Déduction forfaitaire/heures supplémentaires</div>
<div class="t r" style="right:169px;top:322px">5.00</div>
<div class="t r" style="right:112px;top:322px">- 1.5000</div>
<div class="t r" style="right:55px;top:322px">- 7.50</div>
<div class="t" style="left:822px;top:322px">1R0004</div>
<div class="a" style="left:1px;top:337px;width:48px;height:15px;background:#f4f4f4"></div>
<div class="a" style="left:50px;top:337px;width:426px;height:15px;background:#f4f4f4"></div>
<div class="a" style="left:477px;top:337px;width:56px;height:15px;background:#fdf5e6"></div>
<div class="a" style="left:534px;top:337px;width:56px;height:15px;background:#fdf5e6"></div>
<div class="a" style="left:591px;top:337px;width:56px;height:15px;background:#ffe4e1"></div>
<div class="a" style="left:648px;top:337px;width:57px;height:15px;background:#fdf5e6"></div>
<div class="a" style="left:706px;top:337px;width:56px;height:15px;background:#fdf5e6"></div>
<div class="a" style="left:763px;top:337px;width:56px;height:15px;background:#ffe4e1"></div>
<div class="a" style="left:820px;top:337px;width:45px;height:15px;background:#f4f4f4"></div>
<div class="a" style="left:49px;top:337px;width:1px;height:15px;background:#e0dfdc"></div>
<div class="a" style="left:476px;top:337px;width:1px;height:15px;background:#e0dfdc"></div>
<div class="a" style="left:533px;top:337px;width:1px;height:15px;background:#e0dfdc"></div>
<div class="a" style="left:590px;top:337px;width:1px;height:15px;background:#e0dfdc"></div>
<div class="a" style="left:647px;top:337px;width:1px;height:15px;background:#e0dfdc"></div>
<div class="a" style="left:705px;top:337px;width:1px;height:15px;background:#e0dfdc"></div>
<div class="a" style="left:762px;top:337px;width:1px;height:15px;background:#e0dfdc"></div>
<div class="a" style="left:819px;top:337px;width:1px;height:15px;background:#e0dfdc"></div>
<div class="t" style="left:3px;top:337px;letter-spacing:-0.5px">SS013.2</div>
<div class="t" style="left:52px;top:337px">Exonération cotisation sur HC/HS</div>
<div class="t r" style="right:341px;top:337px">68.60</div>
<div class="t r" style="right:284px;top:337px">- 11.3100</div>
<div class="t r" style="right:227px;top:337px">- 7.76</div>
<div class="t" style="left:822px;top:337px">1R0003</div>
<div class="a" style="left:1px;top:352px;width:48px;height:15px;background:#f4f4f4"></div>
<div class="a" style="left:50px;top:352px;width:426px;height:15px;background:#f4f4f4"></div>
<div class="a" style="left:477px;top:352px;width:56px;height:15px;background:#fdf5e6"></div>
<div class="a" style="left:534px;top:352px;width:56px;height:15px;background:#fdf5e6"></div>
<div class="a" style="left:591px;top:352px;width:56px;height:15px;background:#ffe4e1"></div>
<div class="a" style="left:648px;top:352px;width:57px;height:15px;background:#fdf5e6"></div>
<div class="a" style="left:706px;top:352px;width:56px;height:15px;background:#fdf5e6"></div>
<div class="a" style="left:763px;top:352px;width:56px;height:15px;background:#ffe4e1"></div>
<div class="a" style="left:820px;top:352px;width:45px;height:15px;background:#f4f4f4"></div>
<div class="a" style="left:49px;top:352px;width:1px;height:15px;background:#e0dfdc"></div>
<div class="a" style="left:476px;top:352px;width:1px;height:15px;background:#e0dfdc"></div>
<div class="a" style="left:533px;top:352px;width:1px;height:15px;background:#e0dfdc"></div>
<div class="a" style="left:590px;top:352px;width:1px;height:15px;background:#e0dfdc"></div>
<div class="a" style="left:647px;top:352px;width:1px;height:15px;background:#e0dfdc"></div>
<div class="a" style="left:705px;top:352px;width:1px;height:15px;background:#e0dfdc"></div>
<div class="a" style="left:762px;top:352px;width:1px;height:15px;background:#e0dfdc"></div>
<div class="a" style="left:819px;top:352px;width:1px;height:15px;background:#e0dfdc"></div>
<div class="t" style="left:3px;top:352px;letter-spacing:-0.5px">PR110</div>
<div class="t" style="left:52px;top:352px">Prévoyance non cadre TrA</div>
<div class="t r" style="right:341px;top:352px">1 733.27</div>
<div class="t r" style="right:284px;top:352px">0.2950</div>
<div class="t r" style="right:227px;top:352px">5.11</div>
<div class="t r" style="right:169px;top:352px">1 733.27</div>
<div class="t r" style="right:112px;top:352px">0.2950</div>
<div class="t r" style="right:55px;top:352px">5.11</div>
<div class="t" style="left:822px;top:352px">5024101</div>
<div class="a" style="left:1px;top:367px;width:48px;height:15px;background:#f4f4f4"></div>
<div class="a" style="left:50px;top:367px;width:426px;height:15px;background:#f4f4f4"></div>
<div class="a" style="left:477px;top:367px;width:56px;height:15px;background:#fdf5e6"></div>
<div class="a" style="left:534px;top:367px;width:56px;height:15px;background:#fdf5e6"></div>
<div class="a" style="left:591px;top:367px;width:56px;height:15px;background:#ffe4e1"></div>
<div class="a" style="left:648px;top:367px;width:57px;height:15px;background:#fdf5e6"></div>
<div class="a" style="left:706px;top:367px;width:56px;height:15px;background:#fdf5e6"></div>
<div class="a" style="left:763px;top:367px;width:56px;height:15px;background:#ffe4e1"></div>
<div class="a" style="left:820px;top:367px;width:45px;height:15px;background:#f4f4f4"></div>
<div class="a" style="left:49px;top:367px;width:1px;height:15px;background:#e0dfdc"></div>
<div class="a" style="left:476px;top:367px;width:1px;height:15px;background:#e0dfdc"></div>
<div class="a" style="left:533px;top:367px;width:1px;height:15px;background:#e0dfdc"></div>
<div class="a" style="left:590px;top:367px;width:1px;height:15px;background:#e0dfdc"></div>
<div class="a" style="left:647px;top:367px;width:1px;height:15px;background:#e0dfdc"></div>
<div class="a" style="left:705px;top:367px;width:1px;height:15px;background:#e0dfdc"></div>
<div class="a" style="left:762px;top:367px;width:1px;height:15px;background:#e0dfdc"></div>
<div class="a" style="left:819px;top:367px;width:1px;height:15px;background:#e0dfdc"></div>
<div class="t" style="left:3px;top:367px;letter-spacing:-0.5px">PR112</div>
<div class="t" style="left:52px;top:367px">Rente éducation non cadre TrA</div>
<div class="t r" style="right:341px;top:367px">1 733.27</div>
<div class="t r" style="right:284px;top:367px">0.0750</div>
<div class="t r" style="right:227px;top:367px">1.30</div>
<div class="t r" style="right:169px;top:367px">1 733.27</div>
<div class="t r" style="right:112px;top:367px">0.0750</div>
<div class="t r" style="right:55px;top:367px">1.30</div>
<div class="t" style="left:822px;top:367px">502410...</div>
<div class="a" style="left:1px;top:382px;width:48px;height:15px;background:#f4f4f4"></div>
<div class="a" style="left:50px;top:382px;width:426px;height:15px;background:#f4f4f4"></div>
<div class="a" style="left:477px;top:382px;width:56px;height:15px;background:#fdf5e6"></div>
<div class="a" style="left:534px;top:382px;width:56px;height:15px;background:#fdf5e6"></div>
<div class="a" style="left:591px;top:382px;width:56px;height:15px;background:#ffe4e1"></div>
<div class="a" style="left:648px;top:382px;width:57px;height:15px;background:#fdf5e6"></div>
<div class="a" style="left:706px;top:382px;width:56px;height:15px;background:#fdf5e6"></div>
<div class="a" style="left:763px;top:382px;width:56px;height:15px;background:#ffe4e1"></div>
<div class="a" style="left:820px;top:382px;width:45px;height:15px;background:#f4f4f4"></div>
<div class="a" style="left:49px;top:382px;width:1px;height:15px;background:#e0dfdc"></div>
<div class="a" style="left:476px;top:382px;width:1px;height:15px;background:#e0dfdc"></div>
<div class="a" style="left:533px;top:382px;width:1px;height:15px;background:#e0dfdc"></div>
<div class="a" style="left:590px;top:382px;width:1px;height:15px;background:#e0dfdc"></div>
<div class="a" style="left:647px;top:382px;width:1px;height:15px;background:#e0dfdc"></div>
<div class="a" style="left:705px;top:382px;width:1px;height:15px;background:#e0dfdc"></div>
<div class="a" style="left:762px;top:382px;width:1px;height:15px;background:#e0dfdc"></div>
<div class="a" style="left:819px;top:382px;width:1px;height:15px;background:#e0dfdc"></div>
<div class="t" style="left:3px;top:382px;letter-spacing:-0.5px">PR279</div>
<div class="t" style="left:52px;top:382px">MUTUELLE FAMILLE</div>
<div class="t r" style="right:341px;top:382px">3 428.00</div>
<div class="t r" style="right:169px;top:382px">3 428.00</div>
<div class="t r" style="right:112px;top:382px">3.3000</div>
<div class="t r" style="right:55px;top:382px">113.12</div>
<div class="t" style="left:822px;top:382px">502411...</div>
<div class="a" style="left:1px;top:397px;width:48px;height:15px;background:#f4f4f4"></div>
<div class="a" style="left:50px;top:397px;width:426px;height:15px;background:#f4f4f4"></div>
<div class="a" style="left:477px;top:397px;width:56px;height:15px;background:#fdf5e6"></div>
<div class="a" style="left:534px;top:397px;width:56px;height:15px;background:#fdf5e6"></div>
<div class="a" style="left:591px;top:397px;width:56px;height:15px;background:#ffe4e1"></div>
<div class="a" style="left:648px;top:397px;width:57px;height:15px;background:#fdf5e6"></div>
<div class="a" style="left:706px;top:397px;width:56px;height:15px;background:#fdf5e6"></div>
<div class="a" style="left:763px;top:397px;width:56px;height:15px;background:#ffe4e1"></div>
<div class="a" style="left:820px;top:397px;width:45px;height:15px;background:#f4f4f4"></div>
<div class="a" style="left:49px;top:397px;width:1px;height:15px;background:#e0dfdc"></div>
<div class="a" style="left:476px;top:397px;width:1px;height:15px;background:#e0dfdc"></div>
<div class="a" style="left:533px;top:397px;width:1px;height:15px;background:#e0dfdc"></div>
<div class="a" style="left:590px;top:397px;width:1px;height:15px;background:#e0dfdc"></div>
<div class="a" style="left:647px;top:397px;width:1px;height:15px;background:#e0dfdc"></div>
<div class="a" style="left:705px;top:397px;width:1px;height:15px;background:#e0dfdc"></div>
<div class="a" style="left:762px;top:397px;width:1px;height:15px;background:#e0dfdc"></div>
<div class="a" style="left:819px;top:397px;width:1px;height:15px;background:#e0dfdc"></div>
<div class="t" style="left:3px;top:397px;letter-spacing:-0.5px">TC001.L</div>
<div class="t" style="left:52px;top:397px">Contribution formation prof. (légal)</div>
<div class="t r" style="right:341px;top:397px">1 733.27</div>
<div class="t r" style="right:169px;top:397px">1 733.27</div>
<div class="t r" style="right:112px;top:397px">0.5500</div>
<div class="t r" style="right:55px;top:397px">9.53</div>
<div class="t" style="left:822px;top:397px">1E0959</div>
<div class="a" style="left:1px;top:412px;width:48px;height:15px;background:#f4f4f4"></div>
<div class="a" style="left:50px;top:412px;width:426px;height:15px;background:#f4f4f4"></div>
<div class="a" style="left:477px;top:412px;width:56px;height:15px;background:#fdf5e6"></div>
<div class="a" style="left:534px;top:412px;width:56px;height:15px;background:#fdf5e6"></div>
<div class="a" style="left:591px;top:412px;width:56px;height:15px;background:#ffe4e1"></div>
<div class="a" style="left:648px;top:412px;width:57px;height:15px;background:#fdf5e6"></div>
<div class="a" style="left:706px;top:412px;width:56px;height:15px;background:#fdf5e6"></div>
<div class="a" style="left:763px;top:412px;width:56px;height:15px;background:#ffe4e1"></div>
<div class="a" style="left:820px;top:412px;width:45px;height:15px;background:#f4f4f4"></div>
<div class="a" style="left:49px;top:412px;width:1px;height:15px;background:#e0dfdc"></div>
<div class="a" style="left:476px;top:412px;width:1px;height:15px;background:#e0dfdc"></div>
<div class="a" style="left:533px;top:412px;width:1px;height:15px;background:#e0dfdc"></div>
<div class="a" style="left:590px;top:412px;width:1px;height:15px;background:#e0dfdc"></div>
<div class="a" style="left:647px;top:412px;width:1px;height:15px;background:#e0dfdc"></div>
<div class="a" style="left:705px;top:412px;width:1px;height:15px;background:#e0dfdc"></div>
<div class="a" style="left:762px;top:412px;width:1px;height:15px;background:#e0dfdc"></div>
<div class="a" style="left:819px;top:412px;width:1px;height:15px;background:#e0dfdc"></div>
<div class="t" style="left:3px;top:412px;letter-spacing:-0.5px">TC001</div>
<div class="t" style="left:52px;top:412px">Contribution formation prof. (conventionnel)</div>
<div class="t r" style="right:341px;top:412px">1 733.27</div>
<div class="t r" style="right:169px;top:412px">1 733.27</div>
<div class="t r" style="right:112px;top:412px">0.0250</div>
<div class="t r" style="right:55px;top:412px">0.43</div>
<div class="t" style="left:822px;top:412px">A0999016</div>
<div class="a" style="left:1px;top:427px;width:48px;height:15px;background:#f4f4f4"></div>
<div class="a" style="left:50px;top:427px;width:426px;height:15px;background:#f4f4f4"></div>
<div class="a" style="left:477px;top:427px;width:56px;height:15px;background:#fdf5e6"></div>
<div class="a" style="left:534px;top:427px;width:56px;height:15px;background:#fdf5e6"></div>
<div class="a" style="left:591px;top:427px;width:56px;height:15px;background:#ffe4e1"></div>
<div class="a" style="left:648px;top:427px;width:57px;height:15px;background:#fdf5e6"></div>
<div class="a" style="left:706px;top:427px;width:56px;height:15px;background:#fdf5e6"></div>
<div class="a" style="left:763px;top:427px;width:56px;height:15px;background:#ffe4e1"></div>
<div class="a" style="left:820px;top:427px;width:45px;height:15px;background:#f4f4f4"></div>
<div class="a" style="left:49px;top:427px;width:1px;height:15px;background:#e0dfdc"></div>
<div class="a" style="left:476px;top:427px;width:1px;height:15px;background:#e0dfdc"></div>
<div class="a" style="left:533px;top:427px;width:1px;height:15px;background:#e0dfdc"></div>
<div class="a" style="left:590px;top:427px;width:1px;height:15px;background:#e0dfdc"></div>
<div class="a" style="left:647px;top:427px;width:1px;height:15px;background:#e0dfdc"></div>
<div class="a" style="left:705px;top:427px;width:1px;height:15px;background:#e0dfdc"></div>
<div class="a" style="left:762px;top:427px;width:1px;height:15px;background:#e0dfdc"></div>
<div class="a" style="left:819px;top:427px;width:1px;height:15px;background:#e0dfdc"></div>
<div class="t" style="left:3px;top:427px;letter-spacing:-0.5px">TC004</div>
<div class="t" style="left:52px;top:427px">Taxe d'apprentissage</div>
<div class="t r" style="right:341px;top:427px">1 733.27</div>
<div class="t r" style="right:169px;top:427px">1 733.27</div>
<div class="t r" style="right:112px;top:427px">0.5900</div>
<div class="t r" style="right:55px;top:427px">10.23</div>
<div class="t" style="left:822px;top:427px">1E0992</div>
<div class="a" style="left:1px;top:442px;width:48px;height:15px;background:#f4f4f4"></div>
<div class="a" style="left:50px;top:442px;width:426px;height:15px;background:#f4f4f4"></div>
<div class="a" style="left:477px;top:442px;width:56px;height:15px;background:#fdf5e6"></div>
<div class="a" style="left:534px;top:442px;width:56px;height:15px;background:#fdf5e6"></div>
<div class="a" style="left:591px;top:442px;width:56px;height:15px;background:#ffe4e1"></div>
<div class="a" style="left:648px;top:442px;width:57px;height:15px;background:#fdf5e6"></div>
<div class="a" style="left:706px;top:442px;width:56px;height:15px;background:#fdf5e6"></div>
<div class="a" style="left:763px;top:442px;width:56px;height:15px;background:#ffe4e1"></div>
<div class="a" style="left:820px;top:442px;width:45px;height:15px;background:#f4f4f4"></div>
<div class="a" style="left:49px;top:442px;width:1px;height:15px;background:#e0dfdc"></div>
<div class="a" style="left:476px;top:442px;width:1px;height:15px;background:#e0dfdc"></div>
<div class="a" style="left:533px;top:442px;width:1px;height:15px;background:#e0dfdc"></div>
<div class="a" style="left:590px;top:442px;width:1px;height:15px;background:#e0dfdc"></div>
<div class="a" style="left:647px;top:442px;width:1px;height:15px;background:#e0dfdc"></div>
<div class="a" style="left:705px;top:442px;width:1px;height:15px;background:#e0dfdc"></div>
<div class="a" style="left:762px;top:442px;width:1px;height:15px;background:#e0dfdc"></div>
<div class="a" style="left:819px;top:442px;width:1px;height:15px;background:#e0dfdc"></div>
<div class="t" style="left:3px;top:442px;letter-spacing:-0.5px">TC004.L</div>
<div class="t" style="left:52px;top:442px">Taxe d'apprentissage (Libératoire)</div>
<div class="t r" style="right:341px;top:442px">1 733.27</div>
<div class="t r" style="right:169px;top:442px">1 733.27</div>
<div class="t r" style="right:112px;top:442px">0.0900</div>
<div class="t r" style="right:55px;top:442px">1.56</div>
<div class="t" style="left:822px;top:442px">9E0995</div>
<div class="a" style="left:1px;top:457px;width:48px;height:15px;background:#f4f4f4"></div>
<div class="a" style="left:50px;top:457px;width:426px;height:15px;background:#f4f4f4"></div>
<div class="a" style="left:477px;top:457px;width:56px;height:15px;background:#fdf5e6"></div>
<div class="a" style="left:534px;top:457px;width:56px;height:15px;background:#fdf5e6"></div>
<div class="a" style="left:591px;top:457px;width:56px;height:15px;background:#ffe4e1"></div>
<div class="a" style="left:648px;top:457px;width:57px;height:15px;background:#fdf5e6"></div>
<div class="a" style="left:706px;top:457px;width:56px;height:15px;background:#fdf5e6"></div>
<div class="a" style="left:763px;top:457px;width:56px;height:15px;background:#ffe4e1"></div>
<div class="a" style="left:820px;top:457px;width:45px;height:15px;background:#f4f4f4"></div>
<div class="a" style="left:49px;top:457px;width:1px;height:15px;background:#e0dfdc"></div>
<div class="a" style="left:476px;top:457px;width:1px;height:15px;background:#e0dfdc"></div>
<div class="a" style="left:533px;top:457px;width:1px;height:15px;background:#e0dfdc"></div>
<div class="a" style="left:590px;top:457px;width:1px;height:15px;background:#e0dfdc"></div>
<div class="a" style="left:647px;top:457px;width:1px;height:15px;background:#e0dfdc"></div>
<div class="a" style="left:705px;top:457px;width:1px;height:15px;background:#e0dfdc"></div>
<div class="a" style="left:762px;top:457px;width:1px;height:15px;background:#e0dfdc"></div>
<div class="a" style="left:819px;top:457px;width:1px;height:15px;background:#e0dfdc"></div>
<div class="t" style="left:3px;top:457px;letter-spacing:-0.5px">TC120</div>
<div class="t" style="left:52px;top:457px">Contribution ADESATT</div>
<div class="t r" style="right:341px;top:457px">1 733.27</div>
<div class="t r" style="right:169px;top:457px">1 733.27</div>
<div class="t r" style="right:112px;top:457px">0.0200</div>
<div class="t r" style="right:55px;top:457px">0.35</div>
<div class="t" style="left:822px;top:457px">90999016</div>
<div class="a" style="left:1px;top:472px;width:48px;height:15px;background:#ffebcd"></div>
<div class="a" style="left:50px;top:472px;width:426px;height:15px;background:#ffebcd"></div>
<div class="a" style="left:477px;top:472px;width:56px;height:15px;background:#ffebcd"></div>
<div class="a" style="left:534px;top:472px;width:56px;height:15px;background:#ffebcd"></div>
<div class="a" style="left:591px;top:472px;width:56px;height:15px;background:#ffebcd"></div>
<div class="a" style="left:648px;top:472px;width:57px;height:15px;background:#ffebcd"></div>
<div class="a" style="left:706px;top:472px;width:56px;height:15px;background:#ffebcd"></div>
<div class="a" style="left:763px;top:472px;width:56px;height:15px;background:#ffebcd"></div>
<div class="a" style="left:820px;top:472px;width:45px;height:15px;background:#ffebcd"></div>
<div class="a" style="left:49px;top:472px;width:1px;height:15px;background:#e0dfdc"></div>
<div class="a" style="left:476px;top:472px;width:1px;height:15px;background:#e0dfdc"></div>
<div class="a" style="left:533px;top:472px;width:1px;height:15px;background:#e0dfdc"></div>
<div class="a" style="left:590px;top:472px;width:1px;height:15px;background:#e0dfdc"></div>
<div class="a" style="left:647px;top:472px;width:1px;height:15px;background:#e0dfdc"></div>
<div class="a" style="left:705px;top:472px;width:1px;height:15px;background:#e0dfdc"></div>
<div class="a" style="left:762px;top:472px;width:1px;height:15px;background:#e0dfdc"></div>
<div class="a" style="left:819px;top:472px;width:1px;height:15px;background:#e0dfdc"></div>
<div class="t" style="left:52px;top:472px">Total des retenues déductibles</div>
<div class="t r" style="right:227px;top:472px">318.62</div>
<div class="a" style="left:1px;top:487px;width:48px;height:15px;background:#ffebcd"></div>
<div class="a" style="left:50px;top:487px;width:426px;height:15px;background:#ffebcd"></div>
<div class="a" style="left:477px;top:487px;width:56px;height:15px;background:#ffebcd"></div>
<div class="a" style="left:534px;top:487px;width:56px;height:15px;background:#ffebcd"></div>
<div class="a" style="left:591px;top:487px;width:56px;height:15px;background:#ffebcd"></div>
<div class="a" style="left:648px;top:487px;width:57px;height:15px;background:#ffebcd"></div>
<div class="a" style="left:706px;top:487px;width:56px;height:15px;background:#ffebcd"></div>
<div class="a" style="left:763px;top:487px;width:56px;height:15px;background:#ffebcd"></div>
<div class="a" style="left:820px;top:487px;width:45px;height:15px;background:#ffebcd"></div>
<div class="a" style="left:49px;top:487px;width:1px;height:15px;background:#e0dfdc"></div>
<div class="a" style="left:476px;top:487px;width:1px;height:15px;background:#e0dfdc"></div>
<div class="a" style="left:533px;top:487px;width:1px;height:15px;background:#e0dfdc"></div>
<div class="a" style="left:590px;top:487px;width:1px;height:15px;background:#e0dfdc"></div>
<div class="a" style="left:647px;top:487px;width:1px;height:15px;background:#e0dfdc"></div>
<div class="a" style="left:705px;top:487px;width:1px;height:15px;background:#e0dfdc"></div>
<div class="a" style="left:762px;top:487px;width:1px;height:15px;background:#e0dfdc"></div>
<div class="a" style="left:819px;top:487px;width:1px;height:15px;background:#e0dfdc"></div>
<div class="t" style="left:52px;top:487px">Total des retenues non déductibles</div>
<div class="t r" style="right:227px;top:487px">52.85</div>
<div class="a" style="left:1px;top:502px;width:48px;height:15px;background:#ffebcd"></div>
<div class="a" style="left:50px;top:502px;width:426px;height:15px;background:#ffebcd"></div>
<div class="a" style="left:477px;top:502px;width:56px;height:15px;background:#ffebcd"></div>
<div class="a" style="left:534px;top:502px;width:56px;height:15px;background:#ffebcd"></div>
<div class="a" style="left:591px;top:502px;width:56px;height:15px;background:#ffebcd"></div>
<div class="a" style="left:648px;top:502px;width:57px;height:15px;background:#ffebcd"></div>
<div class="a" style="left:706px;top:502px;width:56px;height:15px;background:#ffebcd"></div>
<div class="a" style="left:763px;top:502px;width:56px;height:15px;background:#ffebcd"></div>
<div class="a" style="left:820px;top:502px;width:45px;height:15px;background:#ffebcd"></div>
<div class="a" style="left:49px;top:502px;width:1px;height:15px;background:#e0dfdc"></div>
<div class="a" style="left:476px;top:502px;width:1px;height:15px;background:#e0dfdc"></div>
<div class="a" style="left:533px;top:502px;width:1px;height:15px;background:#e0dfdc"></div>
<div class="a" style="left:590px;top:502px;width:1px;height:15px;background:#e0dfdc"></div>
<div class="a" style="left:647px;top:502px;width:1px;height:15px;background:#e0dfdc"></div>
<div class="a" style="left:705px;top:502px;width:1px;height:15px;background:#e0dfdc"></div>
<div class="a" style="left:762px;top:502px;width:1px;height:15px;background:#e0dfdc"></div>
<div class="a" style="left:819px;top:502px;width:1px;height:15px;background:#e0dfdc"></div>
<div class="t" style="left:52px;top:502px">Total des retenues</div>
<div class="t r" style="right:227px;top:502px">371.47</div>
<div class="t r" style="right:55px;top:502px">208.59</div>
<div class="a" style="left:1px;top:517px;width:48px;height:15px;background:#fffacd"></div>
<div class="a" style="left:50px;top:517px;width:426px;height:15px;background:#fffacd"></div>
<div class="a" style="left:477px;top:517px;width:56px;height:15px;background:#fffacd"></div>
<div class="a" style="left:534px;top:517px;width:56px;height:15px;background:#fffacd"></div>
<div class="a" style="left:591px;top:517px;width:56px;height:15px;background:#fffacd"></div>
<div class="a" style="left:648px;top:517px;width:57px;height:15px;background:#fffacd"></div>
<div class="a" style="left:706px;top:517px;width:56px;height:15px;background:#fffacd"></div>
<div class="a" style="left:763px;top:517px;width:56px;height:15px;background:#fffacd"></div>
<div class="a" style="left:820px;top:517px;width:45px;height:15px;background:#fffacd"></div>
<div class="a" style="left:49px;top:517px;width:1px;height:15px;background:#e0dfdc"></div>
<div class="a" style="left:476px;top:517px;width:1px;height:15px;background:#e0dfdc"></div>
<div class="a" style="left:533px;top:517px;width:1px;height:15px;background:#e0dfdc"></div>
<div class="a" style="left:590px;top:517px;width:1px;height:15px;background:#e0dfdc"></div>
<div class="a" style="left:647px;top:517px;width:1px;height:15px;background:#e0dfdc"></div>
<div class="a" style="left:705px;top:517px;width:1px;height:15px;background:#e0dfdc"></div>
<div class="a" style="left:762px;top:517px;width:1px;height:15px;background:#e0dfdc"></div>
<div class="a" style="left:819px;top:517px;width:1px;height:15px;background:#e0dfdc"></div>
<div class="t" style="left:52px;top:517px">Net imposable</div>
<div class="t r" style="right:227px;top:517px">1 463.75</div>
<div class="a" style="left:1px;top:36px;width:864px;height:1px;background:#adb5a6"></div>
<div class="a" style="left:1px;top:50px;width:864px;height:1px;background:#adb5a6"></div>
<div class="a" style="left:1px;top:51px;width:864px;height:1px;background:#9eb0e4"></div>
<div class="a" style="left:1px;top:52px;width:864px;height:1px;background:#f6f6f6"></div>
<svg class="a" style="left:0;top:0" width="60" height="60"><g fill="none" stroke-width="1"><path d="M1 36.5H49M1 49.5H49" stroke="#b1b49c"/><path d="M1 36.5H49M1 49.5H49" stroke="#7d8078" stroke-dasharray="1 2"/><path d="M1.5 37V49M48.5 37V49" stroke="#a4a284" stroke-dasharray="1 3"/></g></svg>
<div class="t" style="left:284.5px;top:197px;font-size:10.9px;color:#1870c8;line-height:15px;-webkit-text-stroke:0.15px #1870c8">(1733,27X0,9825)+5,11+1,30+113,12</div>
<svg class="a" style="left:0;top:0" width="871" height="530"><g fill="none" stroke="#4472c4" stroke-width="1.2">
<path d="M481 201.5H487.5M494.5 192.5H490Q487.5 192.5 487.5 195V207Q487.5 209.5 490 209.5H494.5"/>
<path d="M859 354.5H864.5V389.5H859M864.5 372.5H871"/>
</g></svg>

</body></html>
